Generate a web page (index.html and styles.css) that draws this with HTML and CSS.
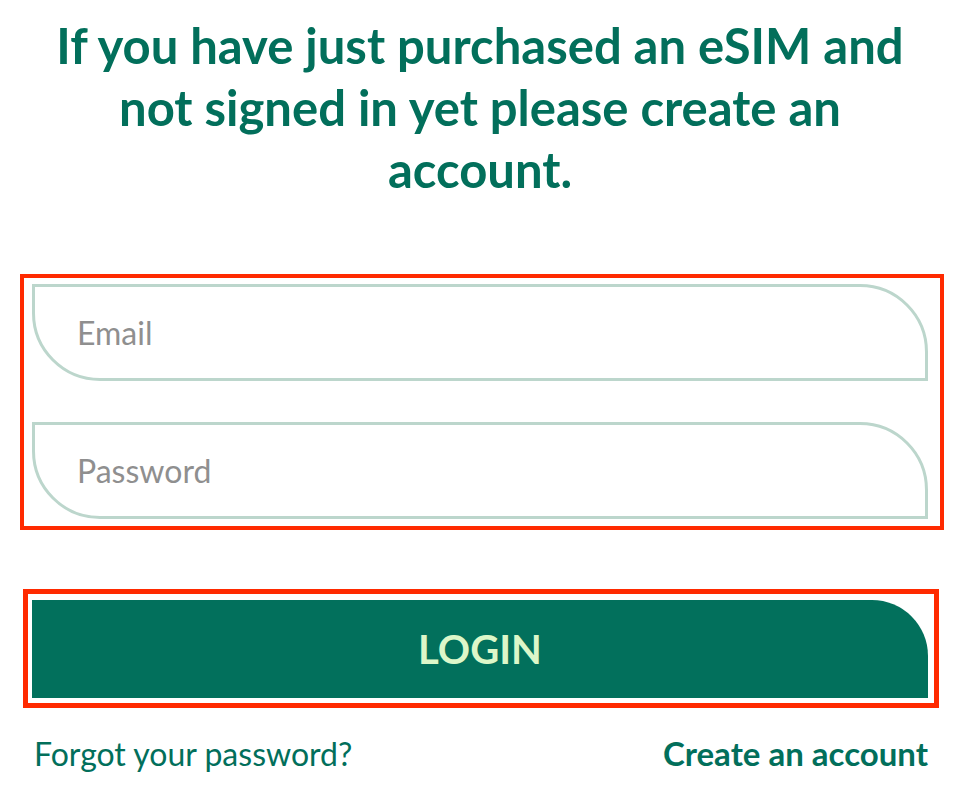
FILE: index.html
```html
<!DOCTYPE html>
<html lang="en">
<head>
<meta charset="utf-8">
<title>Login</title>
<link rel="stylesheet" href="styles.css">
</head>
<body>
<main class="page">
  <h1 class="title">If you have just purchased an eSIM and not signed in yet please create an account.</h1>
  <form class="login-form" onsubmit="return false">
    <div class="fields">
      <input class="field" type="email" placeholder="Email">
      <input class="field" type="password" placeholder="Password">
    </div>
    <div class="submit-wrap">
      <button class="submit" type="submit">LOGIN</button>
    </div>
    <div class="links">
      <a class="link" href="#">Forgot your password?</a>
      <a class="link link-strong" href="#">Create an account</a>
    </div>
  </form>
</main>
</body>
</html>
```
FILE: styles.css
```css
* { box-sizing: border-box; }
html, body { margin: 0; padding: 0; background: #ffffff; }
body {
  font-family: Lato, "Liberation Sans", sans-serif;
  color: #026f5b;
}
.page {
  width: 896px;
  margin: 0 0 0 32px;
}
.title {
  margin: 14px 0 0;
  font-size: 49px;
  line-height: 62px;
  font-weight: 700;
  text-align: center;
  color: #026f5b;
}
.login-form {
  display: flex;
  flex-direction: column;
  margin-top: 74px;
}
.fields {
  display: flex;
  flex-direction: column;
  gap: 41px;
  margin: 0 -16px 0 -12px;
  padding: 6px 12px 7px 8px;
  border: 4px solid #ff2a00;
}
.field {
  display: block;
  width: 100%;
  height: 97px;
  border: 3px solid #bcd6cc;
  border-radius: 0 68px 0 68px;
  padding: 0 0 0 42px;
  font-family: inherit;
  font-size: 32px;
  color: #333;
  background: #fff;
  outline: none;
}
.field::placeholder { color: #8f8f8f; }
.submit-wrap {
  margin: 59px -11px 0 -9px;
  padding: 6px 6px 5px 4px;
  border: 5px solid #ff2a00;
}
.submit {
  display: block;
  width: 100%;
  height: 98px;
  border: 0;
  border-radius: 0 56px 0 0;
  background: #02705c;
  color: #dcf7c9;
  font-family: inherit;
  font-size: 40px;
  font-weight: 700;
  cursor: pointer;
}
.links {
  display: flex;
  justify-content: space-between;
  align-items: baseline;
  margin-top: 27px;
  padding-left: 2px;
}
.link {
  font-size: 32px;
  line-height: 36px;
  color: #026f5b;
  text-decoration: none;
}
.link-strong { font-weight: 700; font-size: 33px; }
```
